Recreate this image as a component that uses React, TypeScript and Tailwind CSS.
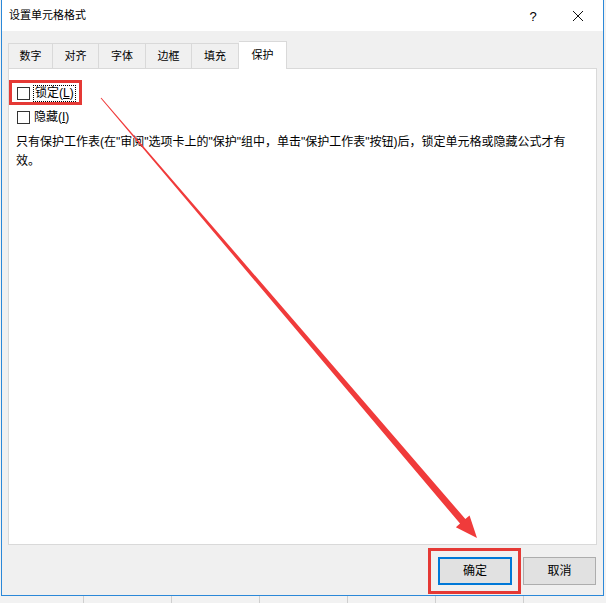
import React from "react";

const tabs = [
  { label: "数字", w: 45 },
  { label: "对齐", w: 46 },
  { label: "字体", w: 47 },
  { label: "边框", w: 46 },
  { label: "填充", w: 47 },
];

const font = { fontFamily: '"Liberation Sans", "Noto Sans CJK SC", sans-serif' };

function Checkbox() {
  return <div className="w-[13px] h-[13px] border border-[#333333] bg-white shrink-0" />;
}

export default function App() {
  return (
    <div className="relative w-[606px] h-[603px] bg-[#f2f2f2] overflow-hidden text-black" style={font}>
      <div className="flex">
        <div className="ml-px w-[603px] h-[596px] border-l border-r border-b border-[#2b88d8] bg-[#f0f0f0] flex flex-col">
          {/* title bar */}
          <div className="h-[31px] bg-white flex items-center pl-[7px] shrink-0">
            <span className="text-[11px] leading-none">设置单元格格式</span>
            <div className="flex-1" />
            <span className="text-[13px] leading-none w-[10px] text-center mr-[34px] mt-[1px]">?</span>
            <svg width="12" height="12" viewBox="0 0 12 12" className="mr-[19px]">
              <path d="M1 1 L11 11 M11 1 L1 11" stroke="#111" strokeWidth="1" />
            </svg>
          </div>
          {/* tabs */}
          <div className="flex items-end pl-[6px] pt-[9px] shrink-0 h-[37px] relative z-10">
            {tabs.map((t, i) => (
              <div
                key={t.label}
                className={`h-[25px] flex items-center justify-center text-[11px] border-t border-r border-[#d9d9d9] ${i === 0 ? "border-l" : ""}`}
                style={{ width: t.w }}
              >
                {t.label}
              </div>
            ))}
            <div className="h-[28px] -mb-px w-[48px] bg-white flex items-center justify-center text-[11px] border-t border-r border-[#d9d9d9]">
              保护
            </div>
          </div>
          {/* panel */}
          <div className="ml-[6px] w-[589px] h-[477px] bg-white border border-[#d9d9d9] shrink-0 pt-[16px] pl-[8px]">
            <div className="flex items-center h-[17px]">
              <Checkbox />
              <span className="ml-[3px] px-px text-[12px] leading-[15px] border border-dotted border-black">
                锁定(<span className="underline">L</span>)
              </span>
            </div>
            <div className="flex items-center h-[17px] mt-[7px]">
              <Checkbox />
              <span className="ml-[4px] text-[12px] leading-[15px]">
                隐藏(<span className="underline">I</span>)
              </span>
            </div>
            <div className="mt-[7px] -ml-px text-[12px] leading-[19px] whitespace-nowrap">
              <div>只有保护工作表(在"审阅"选项卡上的"保护"组中，单击"保护工作表"按钮)后，锁定单元格或隐藏公式才有</div>
              <div>效。</div>
            </div>
          </div>
          {/* buttons */}
          <div className="flex justify-end pt-[12px] pr-[7px] gap-[11px]">
            <div className="w-[74px] h-[28px] bg-[#e1e1e1] border-2 border-[#0078d7] flex items-center justify-center text-[12px]">
              确定
            </div>
            <div className="w-[73px] h-[28px] bg-[#e1e1e1] border border-[#adadad] flex items-center justify-center text-[12px]">
              取消
            </div>
          </div>
        </div>
      </div>
      {/* bottom spreadsheet strip */}
      <div className="flex h-[7px] bg-[#f2f2f2]">
        <div className="w-[84px] border-r border-[#cfcfcf]" />
        <div className="w-[88px] border-r border-[#cfcfcf]" />
        <div className="w-[88px] border-r border-[#cfcfcf]" />
        <div className="w-[88px] border-r border-[#cfcfcf]" />
        <div className="w-[88px] border-r border-[#cfcfcf]" />
        <div className="w-[88px] border-r border-[#cfcfcf]" />
      </div>

      {/* annotations */}
      <div className="absolute left-[9px] top-[80px] w-[73px] h-[25px] border-[3px] border-[#e53935]" />
      <div className="absolute left-[428px] top-[548px] w-[93px] h-[46px] border-[3px] border-[#e53935]" />
      <svg className="absolute left-0 top-0 pointer-events-none" width="606" height="603">
        <polygon
          points="100.62,98.33 460.04,523.58 455.86,527.15 477,538 469.54,515.45 465.36,519.02 101.38,97.67"
          fill="#f03b3b"
        />
      </svg>
    </div>
  );
}
